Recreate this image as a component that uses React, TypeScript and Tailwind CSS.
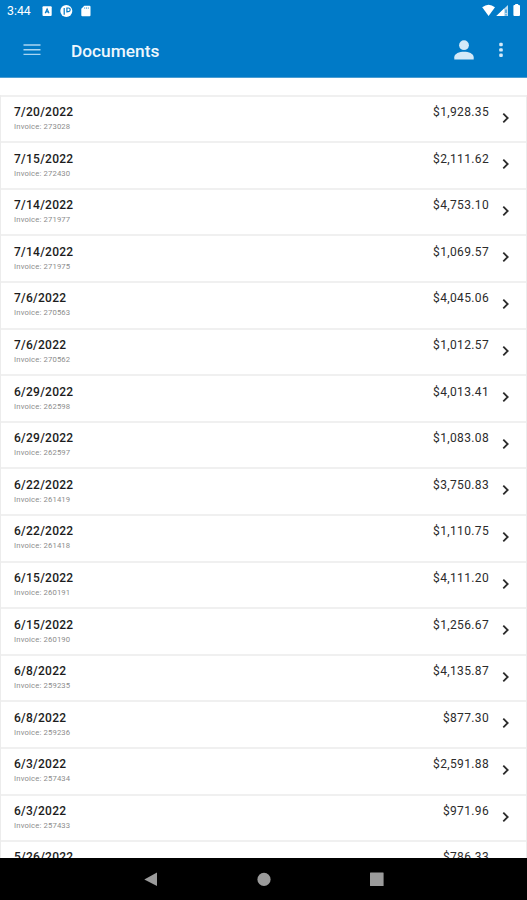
interface Invoice {
  date: string;
  number?: string;
  amount: string;
}

const invoices: Invoice[] = [
  { date: '7/20/2022', number: '273028', amount: '$1,928.35' },
  { date: '7/15/2022', number: '272430', amount: '$2,111.62' },
  { date: '7/14/2022', number: '271977', amount: '$4,753.10' },
  { date: '7/14/2022', number: '271975', amount: '$1,069.57' },
  { date: '7/6/2022', number: '270563', amount: '$4,045.06' },
  { date: '7/6/2022', number: '270562', amount: '$1,012.57' },
  { date: '6/29/2022', number: '262598', amount: '$4,013.41' },
  { date: '6/29/2022', number: '262597', amount: '$1,083.08' },
  { date: '6/22/2022', number: '261419', amount: '$3,750.83' },
  { date: '6/22/2022', number: '261418', amount: '$1,110.75' },
  { date: '6/15/2022', number: '260191', amount: '$4,111.20' },
  { date: '6/15/2022', number: '260190', amount: '$1,256.67' },
  { date: '6/8/2022', number: '259235', amount: '$4,135.87' },
  { date: '6/8/2022', number: '259236', amount: '$877.30' },
  { date: '6/3/2022', number: '257434', amount: '$2,591.88' },
  { date: '6/3/2022', number: '257433', amount: '$971.96' },
  { date: '5/26/2022', amount: '$786.33' },
];

function StatusBar() {
  return (
    <div className="flex h-[23px] items-center pl-[7px] pr-[5px] text-white">
      <span className="w-[35px] text-[12.3px] leading-[23px]">3:44</span>
      <svg className="h-[23px] w-[52px]" viewBox="0 0 52 23" fill="currentColor">
        {/* Keyboard badge */}
        <rect x="0.5" y="6.3" width="9.2" height="9.6" rx="1" />
        <path d="M3.2 13.3 L5.1 8.9 L7 13.3 M3.9 11.9 H6.3" fill="none" stroke="#007ac7" strokeWidth="1.1" />
        {/* Round app badge */}
        <circle cx="24.3" cy="11.1" r="6" />
        <path d="M22.2 14.8 V8 M24.9 12.6 V8 H26.4 A1.8 1.8 0 0 1 26.4 11.6 H24.9" fill="none" stroke="#007ac7" strokeWidth="1.2" />
        {/* SD card */}
        <path d="M42.3 5.8 H47.5 A1 1 0 0 1 48.5 6.8 V15.2 A1 1 0 0 1 47.5 16.2 H40.3 A1 1 0 0 1 39.3 15.2 V8.8 Z" />
        <path d="M42.7 7.2 V9 M44.5 7.2 V9 M46.3 7.2 V9" stroke="#007ac7" strokeWidth="0.5" />
      </svg>
      <svg className="ml-auto h-[23px] w-[40px]" viewBox="0 0 40 23" fill="currentColor">
        <path d="M0.2 7.3 Q6.6 2.1 13 7.3 L6.6 16 Z" />
        <path d="M14.4 16 L26 4.9 V16 Z" opacity="0.75" />
        <path d="M14.4 16 L22.1 8.6 V16 Z" />
        <path d="M24 9.5 V13 M24 14.2 V15.5" stroke="#007ac7" strokeWidth="1" />
        <path d="M33.2 5 V4 H36.2 V5 H37 A1 1 0 0 1 38 6 V15 A1 1 0 0 1 37 16 H32.4 A1 1 0 0 1 31.4 15 V6 A1 1 0 0 1 32.4 5 Z" />
      </svg>
    </div>
  );
}

function AppBar() {
  return (
    <div className="flex h-[54px] items-center pl-[23px] pr-[23px] text-[#d3e9f8]">
      <svg className="h-[14px] w-[18px]" viewBox="0 0 18 14" stroke="#a9d5f2" strokeWidth="1.4">
        <path d="M0.5 2 H17.5 M0.5 6.7 H17.5 M0.5 11.4 H17.5" />
      </svg>
      <h1 className="ml-[30px] pt-[2px] text-[17.3px] font-medium leading-[54px] text-[#eef7fd]">Documents</h1>
      <svg className="ml-auto h-[20px] w-[20px]" viewBox="0 0 20 20" fill="currentColor">
        <circle cx="10" cy="5.2" r="4.9" />
        <path d="M0.3 19.5 V17.2 C0.3 13.5 5.5 11.7 10 11.7 C14.5 11.7 19.7 13.5 19.7 17.2 V19.5 Z" />
      </svg>
      <svg className="ml-[24px] h-[18px] w-[6px]" viewBox="0 0 6 18" fill="currentColor">
        <rect x="1.2" y="1.8" width="3.6" height="3.4" rx="1.2" />
        <rect x="1.2" y="7.2" width="3.6" height="3.4" rx="1.2" />
        <rect x="1.2" y="12.6" width="3.6" height="3.4" rx="1.2" />
      </svg>
    </div>
  );
}

function InvoiceRow({ invoice }: { invoice: Invoice }) {
  return (
    <li className="flex h-[46.6px] shrink-0 border-t-2 border-[#f0f0f0] pl-[13px] pr-[16px]">
      <div className="pt-[7.4px]">
        <p className="text-[12px] font-medium leading-[16px] tracking-[0.25px] text-[#1c1c1c]">{invoice.date}</p>
        {invoice.number && (
          <p className="text-[7.7px] leading-[14px] tracking-[0.15px] text-[#8c8c8c]">Invoice: {invoice.number}</p>
        )}
      </div>
      <p className="ml-auto pt-[7.4px] text-[12px] leading-[16px] tracking-[0.35px] text-[#2b2b2b]">{invoice.amount}</p>
      <svg className="ml-[12px] mt-[14px] h-[14px] w-[9px]" viewBox="0 0 9 14" fill="none" stroke="#2b2b2b" strokeWidth="1.8">
        <path d="M2.3 2.6 L6.7 7 L2.3 11.4" />
      </svg>
    </li>
  );
}

function NavigationBar() {
  return (
    <div className="flex h-[42px] shrink-0 items-center justify-between bg-black pl-[144px] pr-[143px] text-[#9b9b9b]">
      <svg className="h-[14px] w-[14px]" viewBox="0 0 14 14" fill="currentColor">
        <path d="M0.3 7.4 L13 0.4 V14 Z" />
      </svg>
      <svg className="h-[14px] w-[14px]" viewBox="0 0 14 14" fill="currentColor">
        <circle cx="7" cy="7.4" r="6.6" />
      </svg>
      <svg className="h-[14px] w-[14px]" viewBox="0 0 14 14" fill="currentColor">
        <rect y="0.4" width="13.6" height="13.6" rx="0.5" />
      </svg>
    </div>
  );
}

export default function App() {
  return (
    <div className="flex h-[900px] w-[527px] flex-col overflow-hidden bg-white font-['Roboto',sans-serif]">
      <header className="shrink-0 border-b border-[#4a9dd2] bg-[#007ac7]">
        <StatusBar />
        <AppBar />
      </header>
      <main className="min-h-0 flex-1 overflow-hidden pt-[16.6px]">
        <ul className="flex flex-col border-x border-[#ececec]">
          {invoices.map((invoice, index) => (
            <InvoiceRow key={index} invoice={invoice} />
          ))}
        </ul>
      </main>
      <NavigationBar />
    </div>
  );
}
